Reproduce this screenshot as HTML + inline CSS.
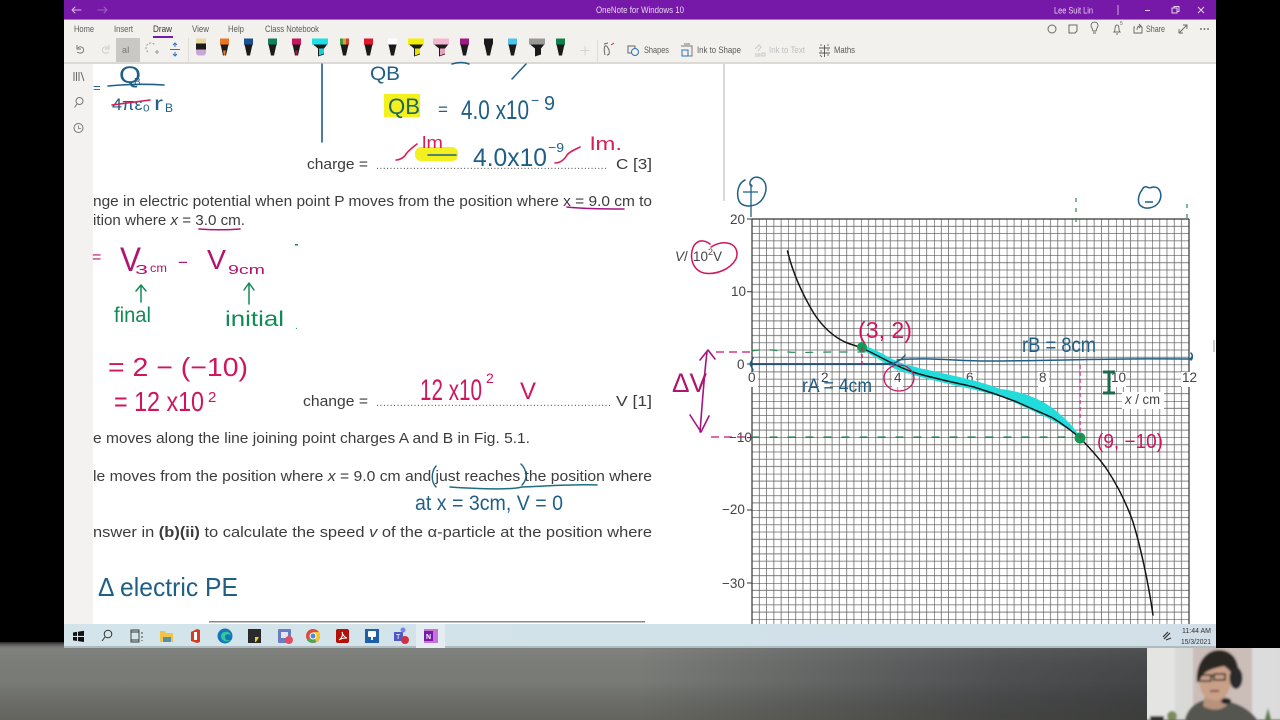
<!DOCTYPE html>
<html><head><meta charset="utf-8"><title>OneNote for Windows 10</title>
<style>
html,body{margin:0;padding:0;width:1280px;height:720px;overflow:hidden;background:#000}
svg{position:absolute;left:0;top:0;display:block;filter:blur(.35px)}
text{font-family:"Liberation Sans",sans-serif}
.ui{font-size:9.5px;fill:#5a5a5a}
.p{font-size:15px;fill:#3c3c3c}
.g{font-size:13.5px;fill:#444}
.ink{fill:none;stroke-linecap:round;stroke-linejoin:round}
</style></head><body>
<svg width="1280" height="720" viewBox="0 0 1280 720" xmlns="http://www.w3.org/2000/svg">
<defs>
<pattern id="gr" patternUnits="userSpaceOnUse" x="752" y="219" width="36.4" height="36.4">
<path d="M7.28 0V36.4M14.56 0V36.4M21.84 0V36.4M29.12 0V36.4M0 7.28H36.4M0 14.56H36.4M0 21.84H36.4M0 29.12H36.4" stroke="#6a6a6a" stroke-width=".8" fill="none"/>
<path d="M0 0V36.4M0 0H36.4" stroke="#383838" stroke-width="1" fill="none"/>
</pattern>
<linearGradient id="desk" x1="0" x2="1" y1="0" y2="0"><stop offset="0" stop-color="#7d7f7b"/><stop offset=".5" stop-color="#7d7f7b"/><stop offset=".78" stop-color="#505254"/><stop offset="1" stop-color="#3c3e40"/></linearGradient>
<linearGradient id="deskv" x1="0" x2="0" y1="0" y2="1"><stop offset="0" stop-color="#000" stop-opacity=".7"/><stop offset=".1" stop-color="#999" stop-opacity=".1"/><stop offset=".5" stop-color="#000" stop-opacity=".03"/><stop offset="1" stop-color="#2a2818" stop-opacity=".3"/></linearGradient>
<linearGradient id="tb" x1="0" x2="1" y1="0" y2="0"><stop offset="0" stop-color="#d3e5ea"/><stop offset="1" stop-color="#d2dfe8"/></linearGradient>
<filter id="bl" x="-5%" y="-5%" width="110%" height="110%"><feGaussianBlur stdDeviation="1"/></filter>
<clipPath id="cam"><rect x="1147" y="648" width="133" height="72"/></clipPath>
</defs>
<rect width="1280" height="720" fill="#000"/>
<rect x="0" y="642" width="1280" height="78" fill="url(#desk)"/>
<rect x="0" y="642" width="1280" height="78" fill="url(#deskv)"/>
<rect x="1216" y="0" width="64" height="648" fill="#000"/>

<!-- window -->
<rect x="64" y="0" width="1152" height="20" fill="#7719a8"/>
<rect x="64" y="19" width="1152" height="1" fill="#a778c4"/>
<rect x="64" y="20" width="1152" height="43" fill="#f3f1ed"/>
<rect x="64" y="62" width="1152" height="2" fill="#dcdad6"/>
<rect x="64" y="64" width="29" height="560" fill="#f3f2f1"/>
<rect x="93" y="64" width="1123" height="560" fill="#fff"/>
<rect x="723" y="64" width="2" height="137" fill="#d9d9d9"/>

<!-- title bar -->
<path d="M72 10h9M75 7l-3 3 3 3" class="ink" stroke="#d6bfe6" stroke-width="1"/>
<path d="M98 10h9M104 7l3 3-3 3" class="ink" stroke="#9d62bf" stroke-width="1"/>
<text x="596" y="13" font-size="9" fill="#e6d6ef" textLength="88" lengthAdjust="spacingAndGlyphs">OneNote for Windows 10</text>
<text x="1054" y="13.500" font-size="9" fill="#e6d6ef" textLength="39" lengthAdjust="spacingAndGlyphs">Lee Suit Lin</text>
<path d="M1118 5v10" stroke="#c9a9dd" stroke-width="1"/>
<path d="M1145 10.500h5" stroke="#e4d4ee" stroke-width="1"/>
<path d="M1172 8h5v5h-5zM1174 8v-1.500h5v5h-2" fill="none" stroke="#e4d4ee" stroke-width="1"/>
<path d="M1198 7l6 6M1204 7l-6 6" stroke="#e4d4ee" stroke-width="1"/>

<!-- ribbon tabs -->
<text class="ui" x="74" y="32" textLength="20" lengthAdjust="spacingAndGlyphs">Home</text>
<text class="ui" x="114" y="32" textLength="19" lengthAdjust="spacingAndGlyphs">Insert</text>
<text class="ui" x="153" y="32" textLength="19" lengthAdjust="spacingAndGlyphs" style="fill:#333">Draw</text>
<rect x="153" y="36" width="20" height="2" fill="#7719a8"/>
<text class="ui" x="192" y="32" textLength="17" lengthAdjust="spacingAndGlyphs">View</text>
<text class="ui" x="228" y="32" textLength="16" lengthAdjust="spacingAndGlyphs">Help</text>
<text class="ui" x="265" y="32" textLength="54" lengthAdjust="spacingAndGlyphs">Class Notebook</text>

<!-- ribbon right -->
<circle cx="1052" cy="29" r="4" fill="none" stroke="#6a6a6a"/>
<path d="M1069 25h8v6l-2 2h-6z" fill="none" stroke="#6a6a6a"/>
<path d="M1092 28a3.500 3.500 0 1 1 5 0l-1 3h-3zM1093 33h3" fill="none" stroke="#6a6a6a" stroke-width=".9"/>
<path d="M1114 32c2-2 0-7 3-7s1 5 3 7zM1116 34h2" fill="none" stroke="#6a6a6a" stroke-width=".9"/>
<text x="1120" y="25" font-size="5" fill="#666">5</text>
<path d="M1135 27h-1v6h8v-6h-1M1137 30c0-3 1-4 3-4M1139 24l2 2-2 2" fill="none" stroke="#666" stroke-width=".9"/>
<text class="ui" x="1146" y="32" textLength="19" lengthAdjust="spacingAndGlyphs">Share</text>
<path d="M1179 33l8-8M1183 25h4v4M1179 29v4h4" fill="none" stroke="#666" stroke-width=".9"/>
<circle cx="1201" cy="29" r=".9" fill="#555"/><circle cx="1204.500" cy="29" r=".9" fill="#555"/><circle cx="1208" cy="29" r=".9" fill="#555"/>

<!-- toolbar left -->
<path d="M77 52c5 3 8-1 6-4-2-2-4-1-5 0M77 45v4h4" fill="none" stroke="#777" stroke-width="1"/>
<path d="M109 52c-5 3-8-1-6-4 2-2 4-1 5 0M109 45v4h-4" fill="none" stroke="#ccc" stroke-width="1"/>
<rect x="116" y="38" width="24" height="24" fill="#c9c8c4"/>
<text x="122" y="53" font-size="9" fill="#777">aI</text>
<path d="M148 52a5 5 0 1 1 7-7" fill="none" stroke="#999" stroke-dasharray="2 1.500"/><path d="M155 52h4M157 50v4" stroke="#999"/>
<path d="M175 43v4M173 45l2-2 2 2M170 49.500h10M175 56v-4M173 54l2 2 2-2" fill="none" stroke="#2a74b8" stroke-width="1"/>
<rect x="188" y="38" width="1" height="24" fill="#dedcd8"/>

<!-- pens -->
<g transform="translate(0,-3.500)">
<rect x="196" y="42" width="10" height="5" fill="#e7d9a0"/><rect x="196" y="47" width="10" height="6" fill="#1a1a1a"/><path d="M196 53h10v4l-2 2h-6l-2-2z" fill="#c9a6d8"/>
<path d="M220 42h9v5l-1 3-2 9h-3l-2-9-1-3z" fill="#1a1a1a"/><rect x="220" y="42" width="9" height="6" fill="#e97622"/><path d="M223 54h3l-.8 5h-1.400z" fill="#e97622"/>
<path d="M244 42h9v5l-1 3-2 9h-3l-2-9-1-3z" fill="#1a1a1a"/><rect x="244" y="42" width="9" height="6" fill="#1a4f91"/>
<path d="M268 42h9v5l-1 3-2 9h-3l-2-9-1-3z" fill="#1a1a1a"/><rect x="268" y="42" width="9" height="6" fill="#10805a"/>
<path d="M292 42h9v5l-1 3-2 9h-3l-2-9-1-3z" fill="#1a1a1a"/><rect x="292" y="42" width="9" height="6" fill="#c9145c"/><path d="M295 54h3l-.8 5h-1.400z" fill="#a01848"/>
<path d="M312 42h16v5l-4 5v6l-6 2v-8l-6-5z" fill="#1a1a1a"/><rect x="312" y="42" width="16" height="6" fill="#19e0ea"/><path d="M319 52h5v5l-5 2z" fill="#19d0da"/>
<path d="M340 42h9v5l-1 3-2 9h-3l-2-9-1-3z" fill="#1a1a1a"/><path d="M340 42h3v6h-3z" fill="#3a9d3a"/><path d="M343 42h3v6h-3z" fill="#e3a020"/><path d="M346 42h3v6h-3z" fill="#d04030"/>
<path d="M364 42h9v5l-1 3-2 9h-3l-2-9-1-3z" fill="#1a1a1a"/><rect x="364" y="42" width="9" height="6" fill="#e8132a"/>
<path d="M388 42h9v5l-1 3-2 9h-3l-2-9-1-3z" fill="#1a1a1a"/><rect x="388" y="42" width="9" height="6" fill="#fff"/>
<path d="M408 42h16v5l-4 5v6l-6 2v-8l-6-5z" fill="#1a1a1a"/><rect x="408" y="42" width="16" height="6" fill="#f4f000"/><path d="M415 52h5v5l-5 2z" fill="#e8e000"/>
<path d="M433 42h16v5l-4 5v6l-6 2v-8l-6-5z" fill="#1a1a1a"/><rect x="433" y="42" width="16" height="6" fill="#f3b6d0"/><path d="M440 52h5v5l-5 2z" fill="#e8a0c0"/>
<path d="M460 42h9v5l-1 3-2 9h-3l-2-9-1-3z" fill="#1a1a1a"/><rect x="460" y="42" width="9" height="6" fill="#a01880"/>
<path d="M484 42h9v5l-1 3-2 9h-3l-2-9-1-3z" fill="#1a1a1a"/>
<path d="M508 42h9v5l-1 3-2 9h-3l-2-9-1-3z" fill="#1a1a1a"/><rect x="508" y="42" width="9" height="6" fill="#4cc4ec"/>
<path d="M529 42h16v5l-4 5v6l-6 2v-8l-6-5z" fill="#1a1a1a"/><rect x="529" y="42" width="16" height="6" fill="#999"/>
<path d="M556 42h9v5l-1 3-2 9h-3l-2-9-1-3z" fill="#1a1a1a"/><rect x="556" y="42" width="9" height="6" fill="#0f8050"/>
</g>
<path d="M585 46v9M580.500 50.500h9" stroke="#d4d4d0"/>
<rect x="597" y="40" width="1" height="22" fill="#dedcd8"/>
<path d="M605 55c-1-4-1-8 0-9 2-1 3 2 4 4 1 3 0 5-2 5M604 44l4-1" fill="none" stroke="#666"/><path d="M611 45l3-2" stroke="#c03030"/>
<rect x="628" y="46" width="7" height="7" fill="none" stroke="#666"/><circle cx="635" cy="52" r="3.500" fill="#f3f1ed" stroke="#2a74b8"/>
<text class="ui" x="644" y="53" textLength="25" lengthAdjust="spacingAndGlyphs">Shapes</text>
<path d="M681 46h11v10h-4M684 44h6" fill="none" stroke="#777"/><path d="M682 50h6v6h-6z" fill="none" stroke="#2a74b8"/>
<text class="ui" x="697" y="53" textLength="44" lengthAdjust="spacingAndGlyphs">Ink to Shape</text>
<path d="M755 49l4-4 2 2-3 4M755 54h5v2h-5M762 53h3v3h-3z" fill="none" stroke="#c8c8c8"/>
<text class="ui" x="769" y="53" textLength="36" lengthAdjust="spacingAndGlyphs" style="fill:#c0c0c0">Ink to Text</text>
<path d="M819 48h11M819 53h11M824.500 45v12" stroke="#555" stroke-width=".9"/><path d="M820 45h2M820 51h2M827 45h2M827 50h2M827 55h2M820 55l2 2" stroke="#555" stroke-width=".8"/>
<text class="ui" x="834" y="53" textLength="21" lengthAdjust="spacingAndGlyphs">Maths</text>

<!-- left rail -->
<path d="M74 72v9M76.500 72v9M79 72v9M81 72l3 9" stroke="#666" stroke-width="1" fill="none"/>
<circle cx="79.500" cy="101" r="3.500" fill="none" stroke="#777"/><path d="M77 104l-2.500 3.500" stroke="#777"/>
<circle cx="78.500" cy="128" r="4.500" fill="none" stroke="#777"/><path d="M78.500 125.500v3h2.500" fill="none" stroke="#777" stroke-width=".8"/>

<!-- printed page text -->
<text class="p" x="307" y="169" textLength="61" lengthAdjust="spacingAndGlyphs">charge =</text>
<text x="376" y="169" font-size="11" fill="#666" textLength="231">.....................................................................</text>
<text class="p" x="616" y="169" textLength="36" lengthAdjust="spacingAndGlyphs">C  [3]</text>
<text class="p" x="93" y="206" textLength="559" lengthAdjust="spacingAndGlyphs">nge in electric potential when point P moves from the position where x = 9.0 cm to</text>
<text class="p" x="93" y="225" textLength="152" lengthAdjust="spacingAndGlyphs">ition where <tspan font-style="italic">x</tspan> = 3.0 cm.</text>
<text class="p" x="303" y="406" textLength="65" lengthAdjust="spacingAndGlyphs">change =</text>
<text x="376" y="406" font-size="11" fill="#666" textLength="235">.....................................................................</text>
<text class="p" x="616" y="406" textLength="36" lengthAdjust="spacingAndGlyphs">V  [1]</text>
<text class="p" x="93" y="443" textLength="437" lengthAdjust="spacingAndGlyphs">e moves along the line joining point charges A and B in Fig. 5.1.</text>
<text class="p" x="93" y="481" textLength="559" lengthAdjust="spacingAndGlyphs">le moves from the position where <tspan font-style="italic">x</tspan> = 9.0 cm and just reaches the position where</text>
<text class="p" x="93" y="537" textLength="559" lengthAdjust="spacingAndGlyphs">nswer in <tspan font-weight="bold">(b)(ii)</tspan> to calculate the speed <tspan font-style="italic">v</tspan> of the α-particle at the position where</text>
<rect x="209" y="621" width="436" height="1.500" fill="#8a8a8a"/>

<!-- highlights -->
<rect x="384" y="94" width="36" height="23" fill="#f4f020"/>
<rect x="415" y="147" width="43" height="14" rx="6" fill="#f4f020"/>

<!-- top-left ink -->
<g fill="#1f5f86">
<text x="119" y="83" font-size="24" textLength="22" lengthAdjust="spacingAndGlyphs">Q</text><text x="134" y="85" font-size="10">B</text>
<text x="93" y="92" font-size="13">=</text>
<text x="112" y="110" font-size="17" textLength="38" lengthAdjust="spacingAndGlyphs">4πε₀</text>
<text x="154" y="110" font-size="19" textLength="9" lengthAdjust="spacingAndGlyphs">r</text><text x="165" y="112" font-size="12">B</text>
<text x="370" y="80" font-size="19" textLength="30" lengthAdjust="spacingAndGlyphs">QB</text>
<text x="388" y="114" font-size="22" fill="#1d6a58" textLength="32" lengthAdjust="spacingAndGlyphs">QB</text>
<text x="438" y="115" font-size="17">=</text>
<text x="461" y="119" font-size="27" textLength="68" lengthAdjust="spacingAndGlyphs">4.0 x10</text>
<text x="531" y="105" font-size="14">−</text><text x="544" y="110" font-size="20" textLength="11" lengthAdjust="spacingAndGlyphs">9</text>
<text x="473" y="166" font-size="25" textLength="74" lengthAdjust="spacingAndGlyphs">4.0x10</text>
<text x="548" y="152" font-size="13" textLength="16" lengthAdjust="spacingAndGlyphs">−9</text>
</g>
<path d="M108 86c20-2 40-2 56-1M322 64v78" class="ink" stroke="#1f5f86" stroke-width="1.600"/>
<path d="M112 105l38-5" class="ink" stroke="#d81f52" stroke-width="1.600"/>
<path d="M452 64c6-2 12-2 17 0M512 79l14-15" class="ink" stroke="#1f5f86" stroke-width="1.500"/>
<path d="M428 155h28" class="ink" stroke="#1f5f86" stroke-width="1.500"/>

<!-- marks -->
<path d="M396 160c3 0 8-2 10-6 3-4 7-7 11-10" class="ink" stroke="#d81f52" stroke-width="1.600"/>
<text x="422" y="148" font-size="17" fill="#d81f52" textLength="21" lengthAdjust="spacingAndGlyphs">lm</text>
<path d="M555 163c5 0 9-3 12-8 2-3 7-5 13-8" class="ink" stroke="#d81f52" stroke-width="1.600"/>
<text x="590" y="150" font-size="18" fill="#d81f52" textLength="32" lengthAdjust="spacingAndGlyphs">lm.</text>
<path d="M567 207c18 2 40 2 57 2" class="ink" stroke="#a6157f" stroke-width="1.600"/>
<path d="M199 229c14 1 28 1 41 0" class="ink" stroke="#b0156f" stroke-width="1.600"/>

<!-- V equation -->
<g fill="#b0156f">
<text x="92" y="262" font-size="16">=</text>
<text x="120" y="271" font-size="34" textLength="21" lengthAdjust="spacingAndGlyphs">V</text>
<text x="135" y="274" font-size="13" textLength="13" lengthAdjust="spacingAndGlyphs">3</text>
<text x="150" y="272" font-size="12" textLength="17" lengthAdjust="spacingAndGlyphs">cm</text>
<text x="178" y="268" font-size="17">−</text>
<text x="207" y="269" font-size="28" textLength="19" lengthAdjust="spacingAndGlyphs">V</text>
<text x="228" y="274" font-size="13" textLength="37" lengthAdjust="spacingAndGlyphs">9cm</text>
</g>
<path d="M141 302V285M136 291l5-6 5 6M249 304V283M244 290l5-7 5 7" class="ink" stroke="#128a55" stroke-width="1.500"/>
<g fill="#128a55">
<text x="114" y="322" font-size="21" textLength="37" lengthAdjust="spacingAndGlyphs">final</text>
<text x="225" y="326" font-size="21" textLength="59" lengthAdjust="spacingAndGlyphs">initial</text>
<text x="295" y="329" font-size="10">.</text>
</g>
<rect x="295" y="244" width="3" height="1.500" fill="#128a55"/>
<g fill="#d0155f">
<text x="108" y="376" font-size="26" textLength="140" lengthAdjust="spacingAndGlyphs">= 2 − (−10)</text>
<text x="114" y="411" font-size="28" textLength="90" lengthAdjust="spacingAndGlyphs">= 12 x10</text>
<text x="208" y="402" font-size="15">2</text>
<text x="420" y="400" font-size="30" textLength="62" lengthAdjust="spacingAndGlyphs">12 x10</text>
<text x="486" y="383" font-size="14">2</text>
<text x="520" y="399" font-size="24" textLength="16" lengthAdjust="spacingAndGlyphs">V</text>
</g>

<!-- just reaches ink -->
<path d="M436 466c-5 6-5 16 0 21M521 464c6 6 7 15 1 21" class="ink" stroke="#1f5f86" stroke-width="1.400"/>
<path d="M450 487c30 2 60 3 72 0 25-1 55-3 75-2" class="ink" stroke="#1f6f80" stroke-width="1.500"/>
<text x="415" y="510" font-size="21" fill="#1f5f86" textLength="148" lengthAdjust="spacingAndGlyphs">at x = 3cm, V = 0</text>
<text x="98" y="596" font-size="26" fill="#1f5f86" textLength="140" lengthAdjust="spacingAndGlyphs">Δ electric PE</text>

<!-- graph -->
<rect x="752" y="219" width="437" height="405" fill="url(#gr)"/>
<path d="M752 219H1189M752 219V624M1189 219V624" stroke="#333" stroke-width="1.200" fill="none"/>
<path d="M752 291.800h-5M752 364h-5M752 437.600h-5M752 510h-5M752 583h-5M752 219h-5" stroke="#333"/>
<g>
<text class="g" x="730" y="224">20</text><text class="g" x="731" y="296">10</text><text class="g" x="737" y="369">0</text>
<text class="g" x="729" y="442">−10</text><text class="g" x="722" y="514">−20</text><text class="g" x="722" y="588">−30</text>
</g>
<rect x="747" y="372" width="11" height="15" fill="#fff"/><rect x="819" y="372" width="11" height="15" fill="#fff"/><rect x="892" y="372" width="11" height="15" fill="#fff"/>
<rect x="965" y="372" width="11" height="15" fill="#fff"/><rect x="1038" y="372" width="11" height="15" fill="#fff"/><rect x="1111" y="372" width="15" height="15" fill="#fff"/><rect x="1181" y="372" width="16" height="15" fill="#fff"/>
<g>
<text class="g" x="748" y="382">0</text><text class="g" x="821" y="382">2</text><text class="g" x="894" y="382">4</text><text class="g" x="966" y="382">6</text><text class="g" x="1039" y="382">8</text><text class="g" x="1111" y="382">10</text><text class="g" x="1182" y="382">12</text>
</g>
<rect x="1122" y="392" width="42" height="17" fill="#fff"/>
<text class="g" x="1125" y="404" textLength="35" lengthAdjust="spacingAndGlyphs"><tspan font-style="italic">x</tspan> / cm</text>
<text class="g" x="675" y="261" font-style="italic">V</text>
<text class="g" x="684" y="261">/</text>
<text class="g" x="693" y="261">10</text>
<text x="708" y="255" font-size="9" fill="#444">2</text>
<text class="g" x="713" y="261">V</text>

<path d="M862 345C880 350 890 360 905 364C930 372 970 377 1000 389C1020 391 1040 398 1055 410C1065 418 1075 428 1081 438C1060 422 1030 410 1005 398C970 387 930 382 895 369C885 363 870 354 862 350Z" fill="#22dcdc"/>
<path d="M787.500 251C792 270 800 290 813.600 313C822 326 832 336 845 342C852 345 857 346 862 348C875 354 885 360 896 365C910 372 922 375 935 378C950 382 962 384 974 387C990 392 1004 397 1017 402C1030 408 1042 413 1053 418C1064 425 1072 431 1080 438C1090 448 1098 457 1106 468C1118 486 1126 502 1133 522C1140 545 1148 580 1153 615" class="ink" stroke="#151515" stroke-width="1.500"/>
<path d="M750 364H895" stroke="#1f4d78" stroke-width="1.800"/>
<path d="M753 358l-3 6 3 6M897 360c30-3 60 1 90 1 60 0 130-3 203-2 3-2 3-4 1-6 2 3 2 5 0 7" class="ink" stroke="#1f5f86" stroke-width="1.500"/>
<path d="M892 364c5-2 10-4 13-9" class="ink" stroke="#1f5f86" stroke-width="1.400"/>
<circle cx="862" cy="347" r="5" fill="#139a55"/>
<circle cx="1080" cy="438" r="5.500" fill="#139a55"/>
<path d="M862 347v18M1080 365v73" stroke="#c8156f" stroke-width="1.200" stroke-dasharray="4 3"/>
<path d="M752 351c15-3 25 0 36 1 15 1 30 0 45 0M840 352h30M752 437H1072" class="ink" stroke="#2a8a5a" stroke-width="1.200" stroke-dasharray="7 11"/>
<path d="M716 352h34M711 437h40" stroke="#c8156f" stroke-width="1.300" stroke-dasharray="8 5"/>
<path d="M707 352c-3 25-5 55-7 80M700 360l8-10 7 9M690 415l11 17 8-16" class="ink" stroke="#a6157f" stroke-width="1.600"/>
<text x="672" y="392" font-size="27" fill="#b0156f" textLength="35" lengthAdjust="spacingAndGlyphs">ΔV</text>
<path d="M710 244c-8-6-16-3-18 7-2 11 3 20 12 22 11 2 26-3 32-14 3-8-1-15-9-16-6-1-11 1-16 4" class="ink" stroke="#d0155f" stroke-width="1.500"/>
<ellipse cx="899" cy="378" rx="15" ry="13" fill="none" stroke="#d0155f" stroke-width="1.300"/>
<text x="858" y="338" font-size="23" fill="#d0155f" textLength="54" lengthAdjust="spacingAndGlyphs">(3, 2)</text>
<text x="1097" y="448" font-size="20" fill="#d0155f" textLength="66" lengthAdjust="spacingAndGlyphs">(9, −10)</text>
<text x="1022" y="352" font-size="21" fill="#1f5f86" textLength="74" lengthAdjust="spacingAndGlyphs">rB = 8cm</text>
<text x="802" y="392" font-size="19" fill="#1f5f86" textLength="70" lengthAdjust="spacingAndGlyphs">rA = 4cm</text>
<path d="M745 180c-7 3-9 14-6 21 3 6 12 6 18 3 7-4 11-14 8-21-3-6-10-8-14-3-2 3-1 6 1 6" class="ink" stroke="#1f5f86" stroke-width="1.500"/>
<path d="M743 192h15M751 184v19M751 203v14" stroke="#1f5f86" stroke-width="1.300" fill="none"/>
<path d="M1142 190c-4 5-5 13-1 16 5 4 14 2 18-4 4-7 1-15-5-15-3 0-4 2-7 0-3-1-4 1-5 3z" class="ink" stroke="#1f5f86" stroke-width="1.500"/>
<path d="M1145 202h8" stroke="#1f5f86" stroke-width="1.500"/>
<path d="M1076 198v28M1187 204v16" stroke="#2a8a5a" stroke-width="1.200" stroke-dasharray="4 6"/>
<path d="M1103 372h12M1103 393h12M1109 372v21" stroke="#1b6a4a" stroke-width="3" fill="none"/>
<rect x="1213" y="340" width="2" height="12" fill="#ccc"/>

<!-- taskbar -->
<rect x="64" y="624" width="1152" height="24" fill="url(#tb)"/>
<rect x="64" y="646" width="1152" height="2" fill="#aebcc0"/>
<rect x="416" y="624" width="29" height="24" fill="#e4eef2"/>
<path d="M73 632.500l4-.6v4h-4zM78 631.700l6-1v5.200h-6zM73 637h4v4l-4-.6zM78 637h6v5l-6-.9z" fill="#111"/>
<circle cx="108" cy="634" r="3.800" fill="none" stroke="#333"/><path d="M105 637l-3 4" stroke="#333"/>
<path d="M131 632h8v8h-8zM142 632v2M142 636v2M142 640v1M131 632v-2h8v2M131 640v2h8v-2" fill="none" stroke="#333" stroke-width=".9"/>
<path d="M160 631h5l1 2h7v9h-13z" fill="#f0c44a"/><rect x="163" y="637" width="8" height="5" fill="#5a8fa8"/>
<path d="M191 632l6-3 3 1v12l-3 1-6-2z" fill="#d83b1f"/><rect x="194" y="632" width="3" height="8" fill="#fff"/>
<circle cx="225" cy="636" r="7.500" fill="#1478b8"/><path d="M221 636c0-5 8-6 10-1-3-1-6-1-6 2 0 3 3 4 6 3-4 3-10 1-10-4z" fill="#35c79a"/>
<rect x="248" y="629" width="13" height="14" fill="#2a2a2a"/><path d="M255 637h4l-3 5h-1z" fill="#f0d020"/>
<rect x="278" y="629" width="13" height="14" rx="1" fill="#6c7cc0"/><rect x="281" y="632" width="7" height="6" fill="#e4e4f4"/><circle cx="289" cy="640" r="4" fill="#e05060"/>
<circle cx="313" cy="636" r="7" fill="#dd4b3e"/><path d="M313 636l-6 4a7 7 0 0 0 9 2z" fill="#4aa853"/><path d="M313 632h6a7 7 0 0 1-3 10z" fill="#f7c32e"/><circle cx="313" cy="636" r="3" fill="#4a88d8" stroke="#fff"/>
<rect x="336" y="629" width="13" height="14" rx="2" fill="#b3100c"/><path d="M339 640c3-2 4-5 3-8 1 3 2 5 5 6-3 0-5 0-8 2z" fill="none" stroke="#fff" stroke-width="1"/>
<rect x="365" y="629" width="14" height="14" fill="#1d5fa8"/><rect x="368" y="631" width="8" height="6" rx="1" fill="#fff"/><path d="M372 637v3" stroke="#fff" stroke-width="2"/>
<rect x="394" y="632" width="9" height="9" fill="#5059c9"/><circle cx="403" cy="630" r="2.500" fill="#7b83eb"/><circle cx="405" cy="640" r="4" fill="#d03040"/><text x="396" y="639" font-size="7" fill="#fff">T</text>
<rect x="424" y="629" width="14" height="14" fill="#c873d8"/><rect x="424" y="631" width="9" height="10" fill="#7719aa"/><text x="426" y="639" font-size="7" fill="#fff" font-weight="bold">N</text>
<path d="M1164 639l6-6M1166 640l5-2M1163 637l5-5" fill="none" stroke="#333" stroke-width="1.200"/>
<text x="1182" y="633" font-size="7" fill="#333" textLength="29" lengthAdjust="spacingAndGlyphs">11:44 AM</text>
<text x="1181" y="644" font-size="7" fill="#333" textLength="30" lengthAdjust="spacingAndGlyphs">15/3/2021</text>

<!-- webcam -->
<g clip-path="url(#cam)"><g filter="url(#bl)">
<rect x="1140" y="640" width="140" height="80" fill="#d6d2cd"/>
<rect x="1140" y="640" width="52" height="80" fill="#e4e4e2"/>
<rect x="1175" y="640" width="18" height="80" fill="#d9d9d8"/>
<rect x="1193" y="640" width="60" height="80" fill="#cbbdb8"/>
<rect x="1252" y="640" width="30" height="80" fill="#dcdcdc"/>
<path d="M1184 724c2-14 10-23 26-25 16 0 40 6 50 25z" fill="#545650"/>
<path d="M1205 695c3 8 16 8 20 0l2 10c-6 6-16 6-24 1z" fill="#b8927c"/>
<ellipse cx="1215" cy="680" rx="16" ry="21" fill="#c9a088"/>
<path d="M1197 683c-2-18 8-33 22-33s22 12 19 30l-4 7c0-10-2-16-10-21-8 2-20 4-23 12z" fill="#2a2824"/>
<ellipse cx="1236" cy="678" rx="6.500" ry="11" fill="#2a2a2c"/>
<path d="M1199 675h12v6h-12zM1214 674h11v6h-11zM1211 676h3" fill="none" stroke="#222" stroke-width="1.600"/>
<path d="M1210 691h9" stroke="#80483e" stroke-width="2"/>
<path d="M1231 700c-3 2-5 1-7 2" stroke="#222" stroke-width="1.500" fill="none"/>
<ellipse cx="1226" cy="701" rx="5" ry="3" fill="#222"/>
<rect x="1150" y="716" width="14" height="6" fill="#333"/><circle cx="1172" cy="716" r="5" fill="#7a8a5a"/><path d="M1268 708l-4 14h8z" fill="#5a7a4a"/>
</g></g>
</svg>
</body></html>
